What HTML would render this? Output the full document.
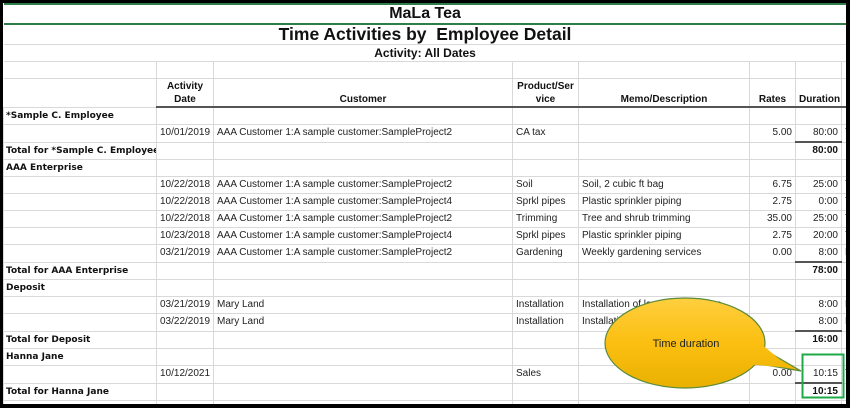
<!DOCTYPE html>
<html><head><style>
body{margin:0;width:850px;height:408px;background:#000;position:relative;overflow:hidden;font-family:"Liberation Sans",Arial,sans-serif;}
#wrap{position:absolute;left:3px;top:3px;width:843px;height:401px;background:#fff;overflow:hidden;}
table{border-collapse:collapse;table-layout:fixed;width:843px;}
td{border:1px solid #d9d9d9;padding:0 3px;font-size:10px;color:#222;white-space:nowrap;overflow:hidden;height:16px;line-height:16px;}
.b{font-weight:bold;color:#111;}
.a{font-family:"DejaVu Sans",Verdana,sans-serif;font-size:9px;font-weight:bold;color:#111;padding-left:2px;}
.r{text-align:right;}
.c{text-align:center;}
.t td{border-left:none;border-right:none;}
.h td{font-weight:bold;color:#111;text-align:center;vertical-align:bottom;line-height:13px;border-bottom:2px solid #555;height:27px;}
.top{border-top:2px solid #555;}
</style></head><body>
<div id="wrap">
<table>
<colgroup><col style="width:153px"><col style="width:57px"><col style="width:299px"><col style="width:66px"><col style="width:171px"><col style="width:46px"><col style="width:46px"><col style="width:5px"></colgroup>
<tr class="t"><td colspan="8" class="c b" style="font-size:16px;height:18px;line-height:18px;border-top:2px solid #2e7d4a;border-bottom:2px solid #2e7d4a;">MaLa Tea</td></tr>
<tr class="t"><td colspan="8" class="c b" style="font-size:17.5px;height:19px;line-height:19px;">Time Activities by&nbsp; Employee Detail</td></tr>
<tr class="t"><td colspan="8" class="c b" style="font-size:12px;height:16px;line-height:16px;">Activity: All Dates</td></tr>
<tr><td style="border-left:none"></td><td></td><td></td><td></td><td></td><td></td><td></td><td></td></tr>
<tr class="h"><td style="border-left:none;border-bottom-color:#d9d9d9;border-bottom-width:1px"></td><td>Activity<br>Date</td><td>Customer</td><td>Product/Ser<br>vice</td><td>Memo/Description</td><td class="r">Rates</td><td>Duration</td><td></td></tr>
<tr><td class="a">*Sample C. Employee</td><td></td><td></td><td></td><td></td><td></td><td></td><td></td></tr>
<tr><td></td><td>10/01/2019</td><td>AAA Customer 1:A sample customer:SampleProject2</td><td>CA tax</td><td></td><td class="r">5.00</td><td class="r">80:00</td><td>Y</td></tr>
<tr><td class="a">Total for *Sample C. Employee</td><td></td><td></td><td></td><td></td><td></td><td class="r b top">80:00</td><td></td></tr>
<tr><td class="a">AAA Enterprise</td><td></td><td></td><td></td><td></td><td></td><td></td><td></td></tr>
<tr><td></td><td>10/22/2018</td><td>AAA Customer 1:A sample customer:SampleProject2</td><td>Soil</td><td>Soil, 2 cubic ft bag</td><td class="r">6.75</td><td class="r">25:00</td><td>Y</td></tr>
<tr><td></td><td>10/22/2018</td><td>AAA Customer 1:A sample customer:SampleProject4</td><td>Sprkl pipes</td><td>Plastic sprinkler piping</td><td class="r">2.75</td><td class="r">0:00</td><td>Y</td></tr>
<tr><td></td><td>10/22/2018</td><td>AAA Customer 1:A sample customer:SampleProject2</td><td>Trimming</td><td>Tree and shrub trimming</td><td class="r">35.00</td><td class="r">25:00</td><td>Y</td></tr>
<tr><td></td><td>10/23/2018</td><td>AAA Customer 1:A sample customer:SampleProject4</td><td>Sprkl pipes</td><td>Plastic sprinkler piping</td><td class="r">2.75</td><td class="r">20:00</td><td>Y</td></tr>
<tr><td></td><td>03/21/2019</td><td>AAA Customer 1:A sample customer:SampleProject2</td><td>Gardening</td><td>Weekly gardening services</td><td class="r">0.00</td><td class="r">8:00</td><td>N</td></tr>
<tr><td class="a">Total for AAA Enterprise</td><td></td><td></td><td></td><td></td><td></td><td class="r b top">78:00</td><td></td></tr>
<tr><td class="a">Deposit</td><td></td><td></td><td></td><td></td><td></td><td></td><td></td></tr>
<tr><td></td><td>03/21/2019</td><td>Mary Land</td><td>Installation</td><td>Installation of landscape design</td><td class="r"></td><td class="r">8:00</td><td>N</td></tr>
<tr><td></td><td>03/22/2019</td><td>Mary Land</td><td>Installation</td><td>Installation of landscape design</td><td class="r"></td><td class="r">8:00</td><td>N</td></tr>
<tr><td class="a">Total for Deposit</td><td></td><td></td><td></td><td></td><td></td><td class="r b top">16:00</td><td></td></tr>
<tr><td class="a">Hanna Jane</td><td></td><td></td><td></td><td></td><td></td><td></td><td></td></tr>
<tr><td></td><td>10/12/2021</td><td></td><td>Sales</td><td></td><td class="r">0.00</td><td class="r">10:15</td><td>Y</td></tr>
<tr><td class="a">Total for Hanna Jane</td><td></td><td></td><td></td><td></td><td></td><td class="r b top">10:15</td><td></td></tr>
<tr><td class="a">Jeremiah Miller</td><td></td><td></td><td></td><td></td><td></td><td></td><td></td></tr>
</table>
</div>
<svg style="position:absolute;left:0;top:0" width="850" height="408">
<defs><linearGradient id="g" gradientUnits="userSpaceOnUse" x1="0" y1="297" x2="0" y2="390"><stop offset="0" stop-color="#ffcf40"/><stop offset="0.5" stop-color="#fbbf10"/><stop offset="1" stop-color="#e8b000"/></linearGradient></defs>
<polygon points="748,362 801,371 758,346" fill="url(#g)" stroke="#5a8a3a" stroke-width="1.2"/>
<ellipse cx="685" cy="343" rx="80" ry="45" fill="url(#g)" stroke="#5a8a3a" stroke-width="1.2"/>
<polygon points="745,364 790,368 760,343" fill="url(#g)"/>
<text x="686" y="347" text-anchor="middle" font-family="Liberation Sans,Arial,sans-serif" font-size="11" fill="#222">Time duration</text>
<rect x="802.5" y="354.5" width="41" height="43" fill="none" stroke="#1faa4a" stroke-width="2"/>
</svg>
</body></html>
